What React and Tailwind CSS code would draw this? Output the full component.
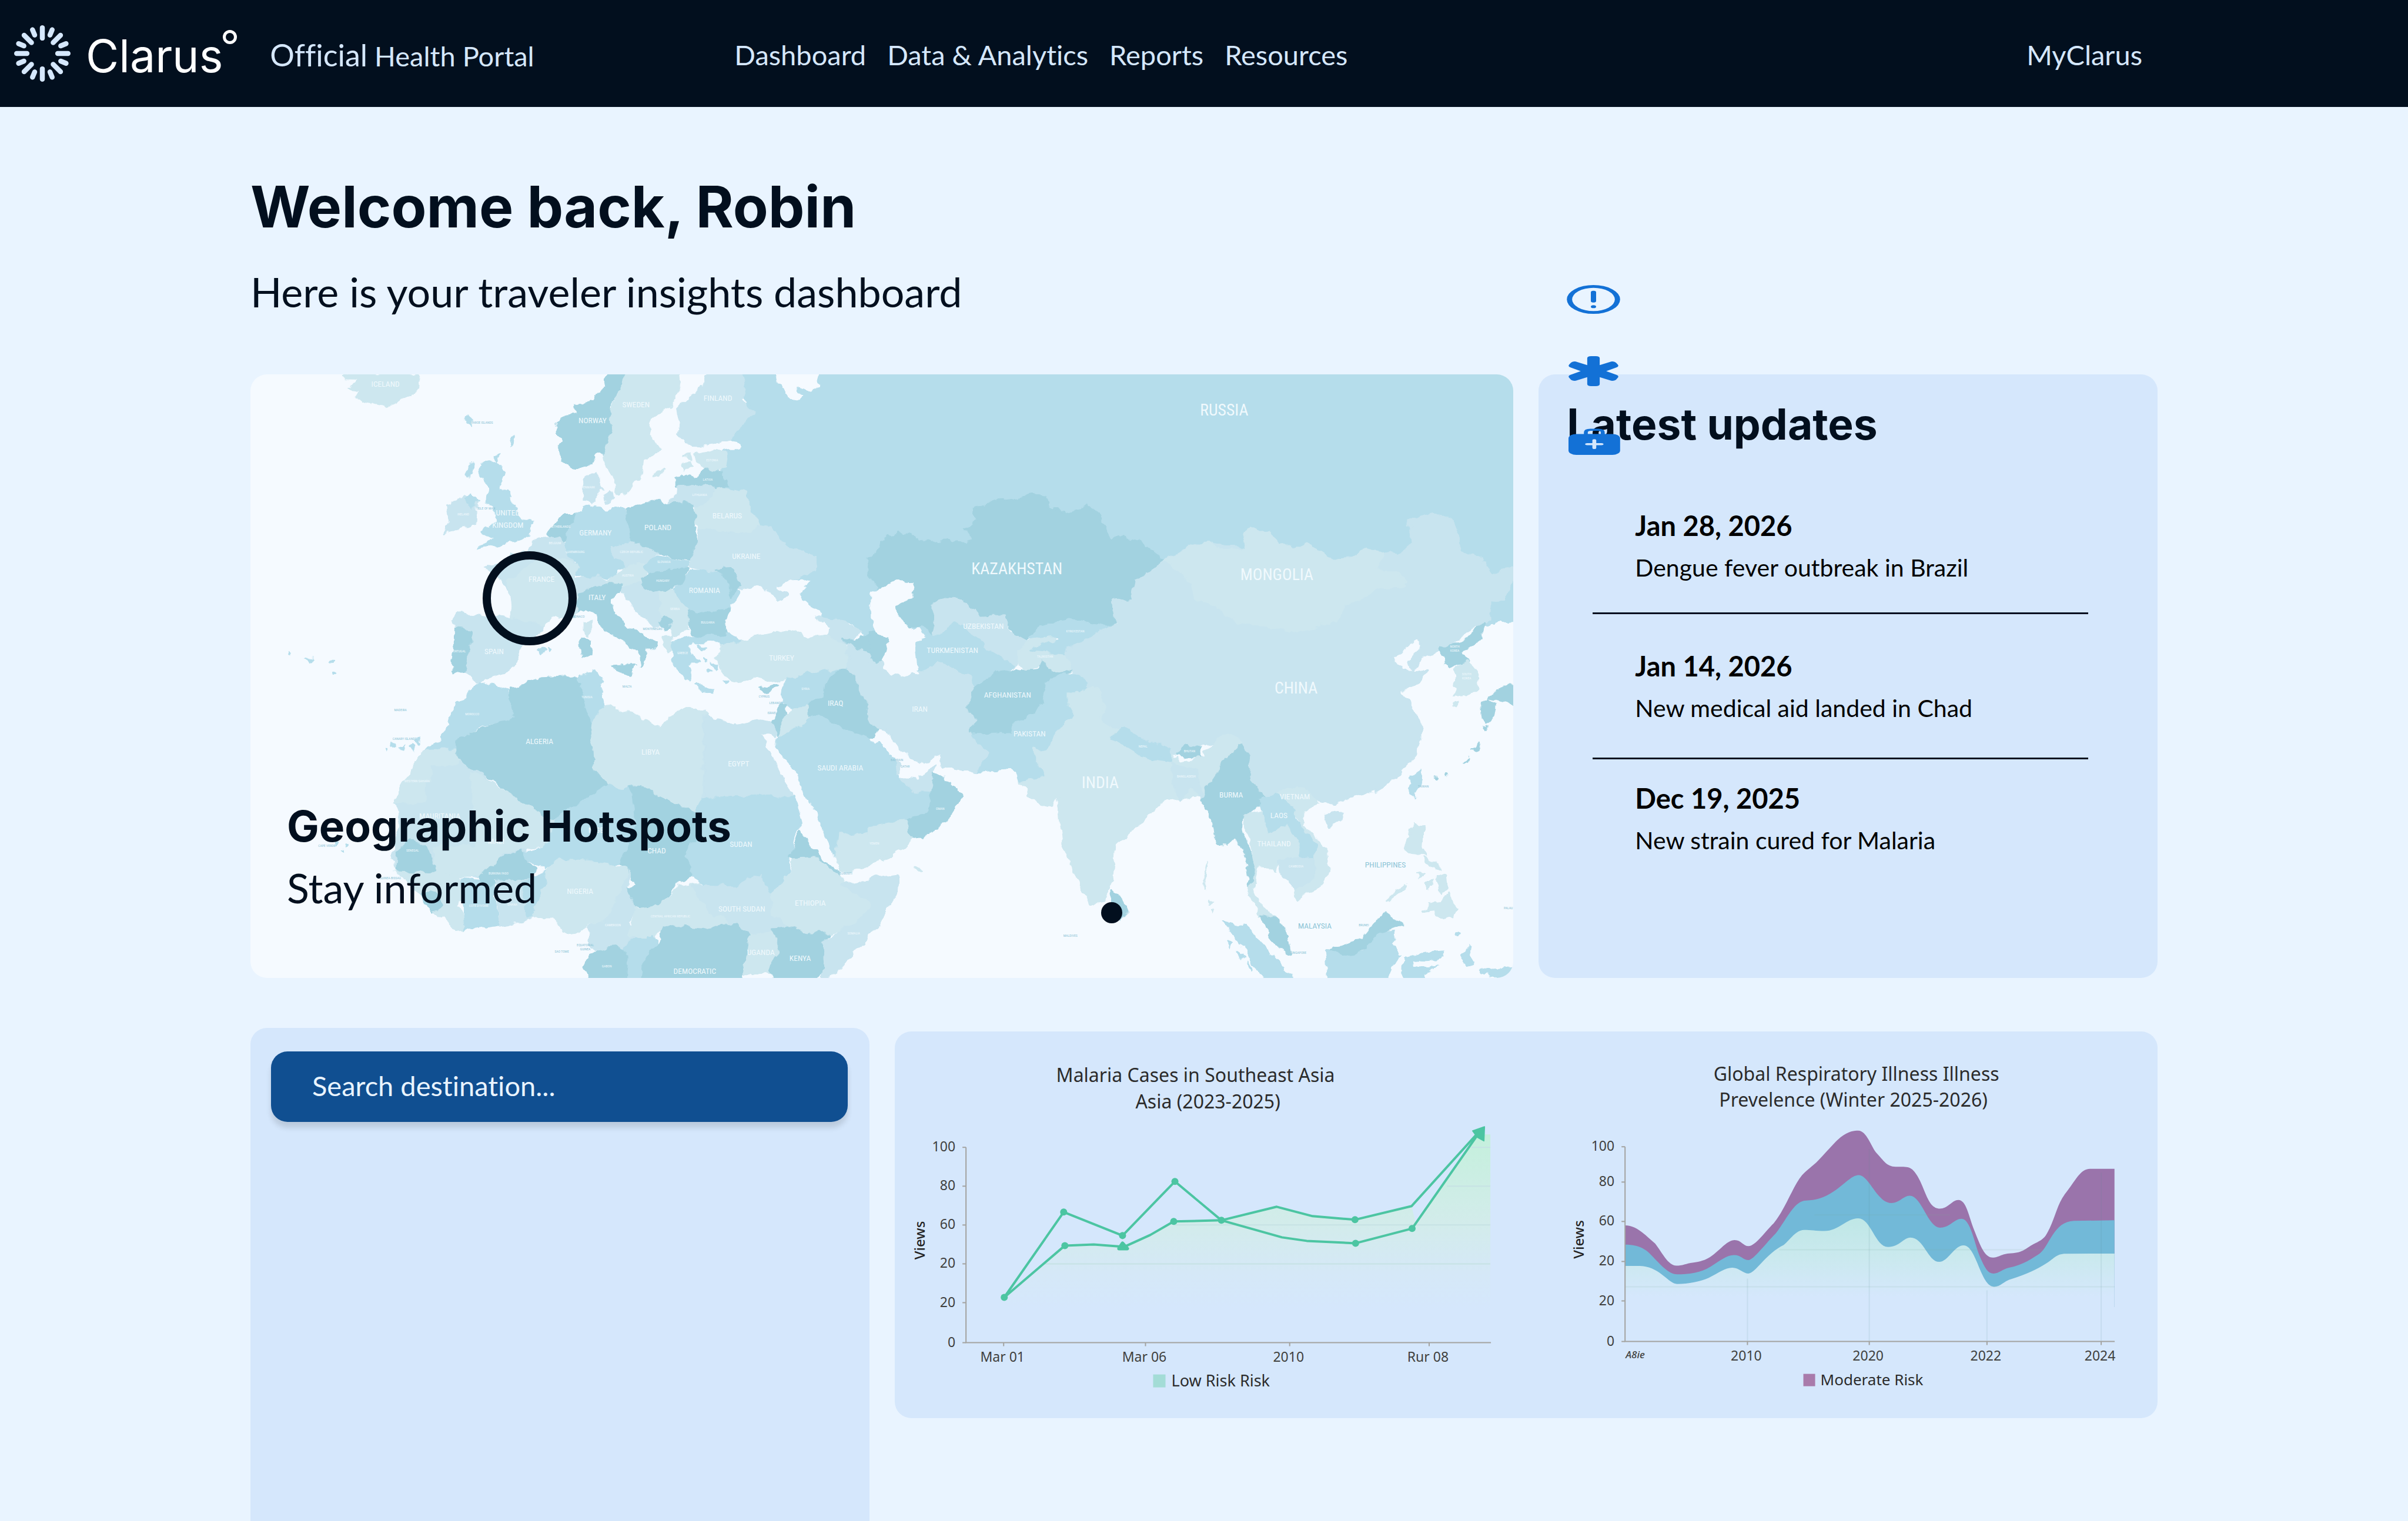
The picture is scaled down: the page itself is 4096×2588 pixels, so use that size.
import React from "react";

const navLinks = ["Dashboard", "Data & Analytics", "Reports", "Resources"];

const updates = [
  { date: "Jan 28, 2026", text: "Dengue fever outbreak in Brazil", box: "pb-[50px] border-b-[3px]" },
  { date: "Jan 14, 2026", text: "New medical aid landed in Chad", box: "pt-[60px] pb-[58px] border-b-[3px]" },
  { date: "Dec 19, 2025", text: "New strain cured for Malaria", box: "pt-[38px] pb-[50px]" },
];

// land tones used on the map
const DARK = "#a2d2e0";
const MID = "#b5ddeb";
const LIGHT = "#c8e4ef";
const PALE = "#cde7ef";
const SEA = "#f5faff";

// the map is stored as two sheets, each one with its own grid
const westShapes = [
  [PALE, "235,6 228,14 265,15 258,28 240,42 270,48 262,65 290,78 325,88 360,80 385,60 410,45 417,25 410,6"],
  [MID, "1205,0 1580,0 1580,760 1520,680 1480,640 1420,640 1400,610 1360,590 1345,565 1300,560 1200,480 1160,300 1165,205 1195,200 1215,190 1185,172 1205,145 1235,105"],
  [SEA, "1296,0 1302,28 1318,50 1332,68 1355,72 1360,60 1340,46 1345,35 1370,40 1385,48 1402,35 1392,22 1398,0"],
  [DARK, "885,0 875,20 880,40 850,60 845,80 800,90 805,105 775,110 755,130 768,145 758,165 770,178 760,190 772,210 765,235 800,248 835,235 858,205 880,220 882,190 890,170 898,150 888,130 885,90 900,65 925,30 930,0"],
  [PALE, "930,0 905,65 887,100 890,130 898,150 888,165 880,190 872,220 885,260 900,285 902,312 930,310 940,285 965,270 970,230 1010,200 1000,180 980,160 985,125 1010,105 1040,85 1055,55 1060,25 1058,0"],
  [LIGHT, "1128,0 1120,35 1075,70 1052,95 1060,130 1055,165 1075,188 1110,190 1160,178 1180,172 1240,105 1215,72 1222,50 1210,0"],
  [PALE, "995,275 1000,258 1018,250 1005,272"],
  [PALE, "1065,240 1085,230 1090,238 1070,250"],
  [PALE, "1068,220 1085,215 1088,224"],
  [PALE, "1095,210 1130,203 1175,208 1170,250 1140,255 1105,240"],
  [DARK, "1050,275 1065,260 1090,270 1105,275 1110,255 1125,248 1165,260 1178,292 1155,305 1120,292 1050,296"],
  [LIGHT, "1054,296 1120,293 1145,305 1130,342 1095,345 1030,340 1050,322"],
  [PALE, "1140,308 1180,300 1225,310 1228,350 1260,395 1235,418 1170,412 1105,408 1095,380 1100,345 1128,340"],
  [MID, "795,365 820,360 820,345 850,345 880,355 925,352 935,400 940,435 910,450 905,465 935,490 900,510 900,530 830,527 805,520 810,490 785,475 778,440 775,420 790,395"],
  [DARK, "930,352 1005,330 1030,340 1090,342 1100,370 1092,395 1104,440 1085,485 1040,478 1000,465 965,450 940,435 935,400"],
  [LIGHT, "820,280 855,258 858,288 870,300 848,320 840,335 822,325"],
  [LIGHT, "868,318 890,305 897,325 880,338"],
  [DARK, "728,420 755,385 770,365 798,365 790,395 775,420 770,435 745,425"],
  [LIGHT, "580,500 640,490 640,470 685,462 695,435 740,425 775,435 780,470 812,500 800,530 805,560 805,620 780,632 740,625 720,655 640,645 645,600 640,560 620,530 590,515"],
  [PALE, "640,540 700,490 780,480 812,500 800,530 805,620 780,632 740,625 720,655 640,645 645,600"],
  [LIGHT, "802,530 855,528 885,540 870,555 840,558 805,570"],
  [LIGHT, "895,455 935,435 960,445 1005,468 985,490 935,495 900,475"],
  [PALE, "880,540 905,520 925,498 975,495 975,520 965,540 930,550 895,548"],
  [MID, "970,500 1005,475 1080,490 1070,510 1015,515 985,522"],
  [LIGHT, "912,555 965,545 1015,570 1020,640 1000,655 960,620 930,585"],
  [PALE, "1012,565 1040,562 1080,608 1080,660 1040,680 1030,655 1015,630"],
  [DARK, "965,535 985,518 1040,505 1080,505 1065,545 1030,560 990,565 970,555"],
  [MID, "1060,550 1085,510 1160,512 1190,555 1212,575 1185,615 1120,618 1080,610 1055,580 1040,562"],
  [LIGHT, "1080,500 1105,440 1105,405 1170,412 1235,418 1250,395 1285,400 1310,435 1365,470 1398,475 1390,510 1330,540 1300,548 1325,570 1300,592 1280,570 1250,550 1215,560 1190,555 1160,512 1120,510"],
  [DARK, "1150,508 1180,505 1212,548 1195,560 1185,580 1180,540"],
  [DARK, "1078,612 1120,618 1190,613 1178,645 1175,680 1090,678"],
  [DARK, "1005,640 1020,628 1038,640 1020,660"],
  [DARK, "805,570 850,555 890,545 915,545 912,570 888,590 900,625 930,655 965,675 1000,700 998,712 970,705 980,725 960,758 955,720 920,690 870,665 855,620 835,605 805,618"],
  [DARK, "893,755 945,750 938,782 900,765"],
  [DARK, "815,685 843,685 840,730 820,730"],
  [PALE, "825,645 838,640 838,678 825,675"],
  [PALE, "1018,680 1040,680 1045,712 1028,718"],
  [MID, "1040,712 1050,690 1110,680 1170,680 1150,695 1095,695 1080,705 1085,725 1105,745 1075,745 1088,790 1060,775 1042,738"],
  [MID, "1095,806 1145,813 1140,822 1100,816"],
  [MID, "1110,700 1122,712 1116,716"],
  [MID, "1138,745 1150,752 1148,762"],
  [MID, "1120,735 1130,740 1124,744"],
  [MID, "1128,762 1136,768 1130,772"],
  [MID, "1168,795 1178,790 1172,800"],
  [SEA, "1190,605 1215,562 1250,552 1280,570 1300,592 1330,578 1325,566 1300,553 1330,540 1382,534 1352,568 1362,592 1400,615 1427,655 1420,678 1375,688 1330,670 1270,667 1220,684 1180,678 1172,650"],
  [LIGHT, "1395,628 1470,640 1505,668 1470,700 1425,682 1430,655"],
  [PALE, "1155,700 1205,690 1250,680 1330,662 1375,685 1425,678 1470,700 1480,765 1400,775 1330,785 1290,795 1250,785 1200,797 1160,765 1150,735 1165,715"],
  [MID, "1145,680 1180,676 1205,692 1155,698"],
  [DARK, "1465,685 1490,690 1535,665 1580,700 1580,745 1535,725 1500,730"],
  [DARK, "1255,815 1302,803 1275,827"],
  [LIGHT, "500,640 515,620 560,625 640,632 720,652 722,664 665,705 660,745 625,775 575,788 560,798 540,775 525,770 520,700 510,665"],
  [DARK, "505,660 550,665 545,690 535,710 535,740 528,772 500,775 497,740 505,700"],
  [MID, "708,715 722,710 730,716 716,723"],
  [MID, "736,710 745,712 740,716"],
  [MID, "575,235 605,230 632,262 608,300 635,310 650,345 670,378 695,385 690,420 650,435 600,445 565,456 600,425 568,408 612,388 600,350 580,330 590,300 562,262"],
  [LIGHT, "485,345 530,318 560,330 555,390 515,402 480,415 490,380"],
  [MID, "525,325 545,316 562,332 550,350"],
  [MID, "600,215 615,210 608,228"],
  [MID, "638,172 650,166 644,192"],
  [MID, "530,122 548,120 545,140"],
  [MID, "540,240 550,236 545,262 532,270"],
  [MID, "565,798 635,820 640,855 655,885 570,912 510,940 510,975 428,973 470,945 488,905 500,870 540,830"],
  [LIGHT, "395,1025 428,973 510,973 560,1028 620,1080 680,1230 560,1300 360,1283 350,1240 372,1170 358,1108 375,1055"],
  [PALE, "395,1025 428,973 508,973 508,1010 445,1012 445,1048 428,1055 425,1105 355,1108 375,1055"],
  [PALE, "548,1030 750,1152 740,1210 680,1222 620,1240 580,1290 520,1300 458,1283 455,1222 552,1220"],
  [DARK, "640,815 720,785 815,780 820,830 840,880 845,960 845,1010 885,1058 775,1130 740,1152 510,990 510,942 655,885 640,850"],
  [MID, "815,780 850,768 868,785 858,830 875,862 850,890 840,905 825,850"],
  [PALE, "875,860 920,872 960,880 975,900 1015,917 1035,890 1070,863 1120,870 1120,1140 1100,1135 955,1062 920,1078 885,1060 850,1020 845,950 840,900"],
  [LIGHT, "1118,888 1205,908 1250,893 1300,905 1298,940 1258,928 1300,1020 1340,1092 1118,1092"],
  [MID, "775,1130 885,1060 920,1078 945,1066 955,1160 915,1262 870,1272 760,1258 730,1282 668,1240 740,1208 750,1150"],
  [MID, "1120,1092 1340,1090 1358,1160 1340,1200 1325,1290 1285,1345 1250,1310 1200,1325 1130,1325 1085,1290 1068,1240 1090,1190 1100,1130"],
  [DARK, "940,1070 955,1062 1105,1138 1100,1190 1070,1240 1090,1290 1050,1320 1010,1370 945,1375 920,1332 950,1320 912,1265 952,1160"],
  [DARK, "360,1235 395,1203 435,1222 458,1283 360,1283"],
  [PALE, "358,1285 510,1290 525,1340 500,1375 465,1387 425,1345"],
  [DARK, "425,1340 455,1335 475,1375 450,1390"],
  [PALE, "455,1385 500,1370 530,1400 530,1437 490,1420"],
  [MID, "520,1305 600,1310 612,1422 530,1437"],
  [DARK, "565,1295 620,1250 665,1232 702,1275 680,1308 600,1310 580,1330"],
  [LIGHT, "608,1310 680,1305 692,1405 615,1425"],
  [MID, "675,1310 735,1285 720,1350 700,1402 680,1402"],
  [PALE, "730,1290 760,1256 870,1262 930,1280 915,1340 885,1400 840,1422 800,1442 770,1432 745,1402 695,1402 722,1340"],
  [LIGHT, "935,1282 930,1330 950,1380 930,1420 990,1455 975,1500 900,1500 840,1480 835,1430 890,1395"],
  [PALE, "950,1380 1010,1370 1060,1322 1110,1315 1200,1422 1100,1432 1010,1432 990,1458 932,1445"],
  [LIGHT, "1090,1320 1200,1322 1255,1290 1285,1345 1290,1400 1340,1430 1220,1452 1190,1425 1130,1380"],
  [PALE, "1340,1248 1400,1242 1450,1290 1470,1320 1545,1368 1470,1432 1420,1447 1340,1435 1290,1400 1285,1345 1330,1290"],
  [DARK, "1332,1245 1355,1182 1385,1225 1455,1292 1440,1285 1400,1243"],
  [LIGHT, "1410,1570 1410,1465 1480,1425 1545,1368 1460,1318 1500,1312 1580,1302 1580,1370 1500,1478 1420,1570"],
  [PALE, "1225,1447 1290,1438 1308,1480 1285,1545 1208,1545 1230,1490"],
  [DARK, "1288,1430 1330,1425 1380,1445 1425,1445 1410,1470 1412,1530 1395,1570 1300,1570 1283,1540 1305,1470"],
  [MID, "940,1455 1000,1455 1000,1500 970,1570 895,1570 905,1500"],
  [DARK, "1020,1425 1100,1432 1195,1420 1230,1450 1225,1495 1208,1570 965,1570 970,1520 1000,1480"],
  [DARK, "835,1500 875,1480 905,1478 930,1500 925,1570 845,1570 825,1530"],
  [MID, "1320,788 1420,770 1480,765 1420,800 1415,850 1345,872 1312,850"],
  [DARK, "1308,855 1320,858 1305,935 1290,900"],
  [PALE, "1315,878 1375,855 1380,880 1350,922 1308,935"],
  [LIGHT, "1475,700 1530,730 1580,745 1580,930 1545,910 1500,830 1475,770"],
  [DARK, "1418,800 1425,785 1460,766 1490,775 1505,830 1548,910 1540,940 1515,944 1405,887 1375,882 1373,855 1415,840"],
  [MID, "1308,935 1350,920 1380,885 1410,886 1515,943 1580,985 1580,1200 1520,1195 1455,1185 1448,1250 1380,1100 1330,1010 1296,962"],
  [PALE, "1450,1190 1520,1185 1580,1185 1580,1245 1500,1275 1455,1287 1445,1240"],
  [MID, "95,718 99,720 97,723"],
  [MID, "140,742 155,740 150,746"],
  [MID, "190,742 207,742 205,746"],
  [MID, "205,772 209,775 206,778"],
  [MID, "350,955 356,958 352,963"],
  [MID, "335,968 340,970 337,975"],
  [MID, "365,962 380,958 378,970"],
  [MID, "395,965 403,962 400,972"],
  [MID, "410,950 420,940 415,958"],
  [MID, "205,1205 210,1208 206,1212"],
  [MID, "222,1230 228,1228 226,1234"],
  [MID, "240,1212 246,1216 242,1220"],
];

const eastShapes = [
  [MID, "-20,0 1570,0 1570,636 1515,642 1500,650 1200,600 600,620 0,600 -20,560"],
  [DARK, "-25,480 0,468 8,440 50,410 78,415 110,440 165,432 210,440 238,435 215,403 242,380 232,352 330,325 375,316 408,320 415,345 470,362 515,342 545,375 575,435 590,425 640,435 700,480 675,510 672,540 630,536 620,582 575,590 588,635 575,657 470,637 420,650 362,692 335,680 310,630 250,627 190,578 138,590 138,680 80,660 45,610 -15,540"],
  [LIGHT, "138,590 185,576 205,585 248,627 310,625 322,670 365,695 390,685 355,740 330,765 280,725 240,690 165,680 138,680"],
  [MID, "80,655 110,658 130,680 155,680 185,643 215,655 245,685 260,712 335,755 320,770 280,780 240,812 225,785 160,750 95,778 80,740"],
  [PALE, "345,715 385,682 435,680 420,715 470,715 480,770 430,782 405,750 365,770 345,745"],
  [MID, "398,655 470,636 578,655 525,685 490,700 470,722 378,715 400,705 445,690 425,678 370,685"],
  [LIGHT, "575,590 620,585 630,536 675,510 705,480 790,440 1130,480 1240,465 1275,472 1312,435 1300,382 1360,360 1410,380 1435,465 1480,480 1500,520 1570,500 1535,585 1500,590 1500,635 1420,685 1382,714 1340,728 1308,765 1302,745 1335,700 1320,686 1280,722 1255,735 1262,750 1285,755 1285,770 1345,766 1335,790 1284,820 1310,862 1335,920 1320,985 1265,1045 1200,1085 1120,1110 1070,1095 1050,1070 990,1080 940,1105 895,1060 915,990 895,957 870,935 720,985 600,925 545,895 520,825 480,775 460,715 520,685 585,650"],
  [PALE, "705,482 800,436 838,460 905,455 897,420 920,400 975,425 980,445 1060,448 1110,480 1160,480 1200,452 1238,465 1220,515 1270,515 1295,547 1220,560 1205,575 1150,595 1130,640 1025,668 870,640 830,600 775,580 768,540"],
  [LIGHT, "98,775 150,748 225,782 235,812 222,865 245,895 230,925 270,980 245,1027 160,1017 155,985 105,1005 60,975 30,920 0,915 -20,905 -20,740 15,760 60,783"],
  [DARK, "235,812 300,768 320,773 395,765 405,743 425,775 475,768 440,785 415,805 412,850 380,880 330,905 325,928 250,935 228,925 245,895 220,865"],
  [MID, "230,932 325,930 330,905 380,880 410,850 415,800 450,775 490,780 520,815 465,830 485,880 440,930 420,965 390,970 412,1040 378,1060 345,1048 330,1020 245,1027 270,980"],
  [PALE, "465,832 535,805 558,855 545,890 600,930 650,965 720,985 740,1000 800,990 830,945 870,932 895,957 850,1000 820,1050 800,1085 700,1100 650,1150 600,1200 580,1220 575,1300 565,1330 550,1360 525,1366 505,1340 480,1280 455,1210 440,1090 425,1115 405,1118 375,1085 345,1052 410,1045 385,972 420,965 445,920 488,878 465,855"],
  [MID, "575,940 600,915 650,945 718,968 718,1000 650,988"],
  [DARK, "733,985 755,960 790,968 792,990"],
  [LIGHT, "718,1003 780,1022 798,1100 768,1068 740,1097 728,1060"],
  [DARK, "573,1332 595,1350 608,1385 595,1405 575,1380"],
  [DARK, "893,956 913,990 908,1050 958,1105 895,1140 890,1180 928,1280 912,1328 900,1240 880,1190 855,1217 835,1215 820,1150 793,1100 815,1055 850,1000"],
  [PALE, "895,1140 940,1132 1000,1165 1035,1200 1035,1248 985,1250 975,1285 935,1265 918,1335 945,1375 975,1405 935,1395 908,1335 928,1285"],
  [PALE, "975,1085 1005,1068 1055,1070 1080,1108 1042,1130 1040,1165 1100,1230 1106,1290 1075,1325 1028,1356 1022,1325 1070,1300 1072,1220 1015,1130"],
  [MID, "938,1105 975,1083 1022,1125 1018,1145 1075,1220 1070,1247 1033,1247 1035,1200 1005,1165 958,1180"],
  [LIGHT, "980,1250 1070,1245 1070,1300 1025,1328 990,1300"],
  [DARK, "940,1395 975,1405 1000,1440 1012,1495 985,1480 950,1430"],
  [MID, "850,1412 900,1425 980,1510 1022,1570 950,1570 905,1490"],
  [MID, "1098,1485 1140,1500 1195,1485 1225,1438 1265,1437 1258,1470 1280,1500 1235,1570 1105,1570"],
  [DARK, "1108,1485 1185,1460 1215,1420 1245,1388 1285,1420 1225,1440 1195,1480 1140,1500"],
  [MID, "1290,1510 1330,1495 1390,1490 1380,1508 1310,1513 1312,1530 1372,1528 1335,1545 1345,1570 1288,1570"],
  [MID, "1435,1500 1455,1472 1450,1500 1458,1520 1440,1525"],
  [MID, "1418,1435 1424,1440 1420,1448"],
  [MID, "1475,1540 1550,1530 1556,1545 1530,1560 1510,1548"],
  [PALE, "1310,1160 1342,1165 1335,1215 1348,1245 1300,1235 1295,1207"],
  [PALE, "1335,1385 1395,1345 1418,1375 1410,1408 1372,1402 1365,1380"],
  [PALE, "1248,1358 1290,1318 1296,1322 1258,1355"],
  [PALE, "1340,1250 1365,1262 1380,1285 1360,1275"],
  [PALE, "1320,1285 1338,1290 1330,1300"],
  [PALE, "1345,1310 1362,1305 1350,1335"],
  [PALE, "1370,1300 1395,1290 1398,1330 1375,1340"],
  [MID, "1330,1022 1334,1050 1315,1092 1300,1075 1308,1040"],
  [LIGHT, "1095,1140 1135,1130 1130,1152 1105,1168"],
  [DARK, "1378,710 1440,690 1490,640 1478,685 1430,722 1450,742 1400,758 1388,735"],
  [PALE, "1412,765 1448,742 1472,790 1462,822 1410,832 1418,795"],
  [DARK, "1570,808 1535,808 1498,838 1570,858"],
  [DARK, "1478,852 1498,842 1515,855 1510,885 1492,902 1482,890"],
  [DARK, "1455,970 1475,955 1465,970"],
  [DARK, "1437,1005 1448,990 1442,1002"],
  [DARK, "1488,912 1496,908 1492,918"],
  [DARK, "1366,1042 1376,1040 1370,1046"],
  [DARK, "1392,1036 1398,1034 1395,1038"],
  [PALE, "1410,855 1425,852 1418,858"],
  [MID, "-20,970 5,955 40,1000 55,1045 85,1077 132,1078 125,1132 65,1155 0,1170 -20,1190"],
  [LIGHT, "58,1045 100,1050 145,1003 132,1080 85,1077"],
  [LIGHT, "46,1008 56,1008 56,1032 48,1034"],
  [DARK, "140,1030 208,1085 190,1120 172,1150 125,1188 85,1200 65,1153 122,1132 132,1078"],
  [PALE, "-20,1168 65,1153 85,1200 68,1220 -20,1258"],
  [LIGHT, "-20,1300 52,1293 45,1340 0,1422 -20,1440"],
  [DARK, "-20,660 0,665 35,700 15,735 0,742 -20,735"],
  [SEA, "-15,570 18,555 50,540 85,545 80,580 40,600 52,640 82,660 90,700 98,775 65,783 15,762 15,735 30,700 10,670 -15,640"],
  [SEA, "82,665 98,658 115,685 90,690"],
  [PALE, "90,1278 112,1279 100,1284"],
  [PALE, "808,1262 800,1330 803,1290"],
  [PALE, "812,1358 818,1362 815,1368"],
  [PALE, "820,1382 824,1385 822,1390"],
  [MID, "855,1465 870,1470 862,1478"],
  [MID, "883,1490 898,1502 890,1508"],
  [MID, "908,1515 918,1528 914,1536"],
];

const place = {
  w: (x, y) => [x * 0.9694, y * 0.9311 - 6],
  e: (x, y) => [1500 + x * 0.9758, y * 0.9311 - 6],
};

// sheet, name, x, y, class name
const big = "text-[39px]";
const mid = "text-[19px]";
const small = "text-[8px]";
const placeNames = [
  ["e", "RUSSIA", 849, 113, big],
  ["e", "KAZAKHSTAN", 341, 520, big],
  ["e", "MONGOLIA", 978, 535, big],
  ["e", "CHINA", 1025, 826, big],
  ["e", "INDIA", 545, 1070, big],
  ["e", "UZBEKISTAN", 259, 660, mid],
  ["e", "TURKMENISTAN", 183, 722, mid],
  ["e", "AFGHANISTAN", 318, 837, mid],
  ["e", "PAKISTAN", 372, 937, mid],
  ["e", "IRAN", 103, 873, mid],
  ["e", "BURMA", 866, 1093, mid],
  ["e", "VIETNAM", 1022, 1098, mid],
  ["e", "LAOS", 983, 1147, mid],
  ["e", "THAILAND", 971, 1219, mid],
  ["e", "KYRGYZSTAN", 484, 669, small],
  ["e", "TAJIKISTAN", 410, 735, small],
  ["e", "NEPAL", 650, 965, small],
  ["e", "BHUTAN", 764, 978, small],
  ["e", "BANGLADESH", 756, 1043, small],
  ["e", "CAMBODIA", 1025, 1274, small],
  ["e", "OMAN", 153, 1125, small],
  ["e", "NORTH", 1414, 708, small],
  ["e", "KOREA", 1414, 719, small],
  ["e", "SOUTH", 1443, 779, small],
  ["e", "KOREA", 1443, 790, small],
  ["w", "ICELAND", 333, 39, mid],
  ["w", "NORWAY", 844, 132, mid],
  ["w", "SWEDEN", 951, 91, mid],
  ["w", "FINLAND", 1153, 75, mid],
  ["w", "UNITED", 635, 369, mid],
  ["w", "KINGDOM", 635, 401, mid],
  ["w", "GERMANY", 851, 421, mid],
  ["w", "POLAND", 1005, 406, mid],
  ["w", "BELARUS", 1176, 377, mid],
  ["w", "UKRAINE", 1223, 480, mid],
  ["w", "ROMANIA", 1120, 569, mid],
  ["w", "FRANCE", 718, 540, mid],
  ["w", "ITALY", 855, 587, mid],
  ["w", "SPAIN", 601, 726, mid],
  ["w", "TURKEY", 1310, 742, mid],
  ["w", "IRAQ", 1443, 858, mid],
  ["w", "ALGERIA", 713, 957, mid],
  ["w", "LIBYA", 987, 984, mid],
  ["w", "EGYPT", 1204, 1013, mid],
  ["w", "SAUDI ARABIA", 1455, 1024, mid],
  ["w", "MAURITANIA", 467, 1148, mid],
  ["w", "MALI", 606, 1213, mid],
  ["w", "NIGER", 858, 1184, mid],
  ["w", "CHAD", 1002, 1237, mid],
  ["w", "SUDAN", 1210, 1221, mid],
  ["w", "NIGERIA", 813, 1342, mid],
  ["w", "SOUTH SUDAN", 1212, 1387, mid],
  ["w", "ETHIOPIA", 1381, 1371, mid],
  ["w", "UGANDA", 1259, 1499, mid],
  ["w", "KENYA", 1356, 1513, mid],
  ["w", "DEMOCRATIC", 1096, 1546, mid],
  ["w", "IRELAND", 525, 369, small],
  ["w", "DENMARK", 833, 299, small],
  ["w", "ESTONIA", 1139, 230, small],
  ["w", "LATVIA", 1128, 280, small],
  ["w", "LITHUANIA", 1108, 319, small],
  ["w", "NETHERLANDS", 764, 401, small],
  ["w", "BELGIUM", 751, 443, small],
  ["w", "LUXEMBOURG", 801, 466, small],
  ["w", "CZECH REPUBLIC", 940, 466, small],
  ["w", "SLOVAKIA", 1020, 491, small],
  ["w", "AUSTRIA", 931, 526, small],
  ["w", "HUNGARY", 1017, 539, small],
  ["w", "SERBIA", 1047, 612, small],
  ["w", "BULGARIA", 1128, 647, small],
  ["w", "GREECE", 1066, 726, small],
  ["w", "PORTUGAL", 513, 721, small],
  ["w", "MOROCCO", 547, 882, small],
  ["w", "TUNISIA", 830, 839, small],
  ["w", "SYRIA", 1369, 818, small],
  ["w", "WESTERN SAHARA", 411, 1054, small],
  ["w", "SENEGAL", 400, 1232, small],
  ["w", "BURKINA FASO", 612, 1292, small],
  ["w", "COTE D'IVOIRE", 563, 1374, small],
  ["w", "GHANA", 646, 1372, small],
  ["w", "CAMEROON", 894, 1425, small],
  ["w", "CENTRAL AFRICAN REPUBLIC", 1036, 1401, small],
  ["w", "GABON", 879, 1530, small],
  ["w", "SOMALIA", 1488, 1446, small],
  ["w", "YEMEN", 1539, 1215, small],
];

// names that stand on water
const seaNames = [
  ["e", "PHILIPPINES", 1244, 1274, mid],
  ["e", "MALAYSIA", 1071, 1431, mid],
  ["e", "SINGAPORE", 1031, 1496, small],
  ["e", "BRUNEI", 1191, 1425, small],
  ["e", "TAIWAN", 1337, 1068, small],
  ["e", "MALDIVES", 472, 1451, small],
  ["e", "PALAU", 1545, 1380, small],
  ["e", "QATAR", 67, 1016, small],
  ["e", "BAHRAIN", 47, 1000, small],
  ["w", "FAROE ISLANDS", 572, 134, small],
  ["w", "ISLE OF MAN", 582, 354, small],
  ["w", "MALTA", 929, 812, small],
  ["w", "CYPRUS", 1267, 837, small],
  ["w", "LEBANON", 1296, 853, small],
  ["w", "ISRAEL", 1287, 880, small],
  ["w", "MONACO", 809, 631, small],
  ["w", "MONTENEGRO", 992, 664, small],
  ["w", "MADEIRA", 370, 871, small],
  ["w", "CANARY ISLANDS", 380, 945, small],
  ["w", "CAPE VERDE", 188, 1221, small],
  ["w", "GUINEA-BISSAU", 345, 1304, small],
  ["w", "EQUATORIAL", 826, 1475, small],
  ["w", "GUINEA", 826, 1486, small],
  ["w", "SAO TOME", 768, 1492, small],
  ["w", "DJIBOUTI", 1469, 1291, small],
];

const MapLabels = ({ names, color }) =>
  names.map(([sheet, name, x, y, size], i) => {
    const [px, py] = place[sheet](x, y);
    return (
      <text
        key={i}
        x={px}
        y={py}
        textAnchor="middle"
        fill={color}
        className={`${size} font-['Roboto_Condensed','Liberation_Sans_Narrow',Roboto,sans-serif]`}
      >
        {name}
      </text>
    );
  });

const WorldMap = () => (
  <svg viewBox="0 0 3020 1444" preserveAspectRatio="xMidYMid slice" className="block w-full h-full">
    <defs>
      {/* roughens the borders so coasts don't look ruled */}
      <filter id="coast" x="-20" y="-20" width="3060" height="1484" filterUnits="userSpaceOnUse" colorInterpolationFilters="sRGB">
        <feTurbulence type="fractalNoise" baseFrequency="0.035" numOctaves="3" seed="4" result="noise" />
        <feDisplacementMap in="SourceGraphic" in2="noise" scale="22" xChannelSelector="R" yChannelSelector="G" />
      </filter>
    </defs>
    <rect width="3020" height="1444" fill={SEA} />
    <g filter="url(#coast)">
      <g transform="translate(0 -6) scale(0.9694 0.9311)">
        {westShapes.map(([fill, points], i) => (
          <polygon key={i} points={points} fill={fill} stroke={fill} strokeWidth="4" strokeLinejoin="round" />
        ))}
      </g>
      <g transform="translate(1500 -6) scale(0.9758 0.9311)">
        {eastShapes.map(([fill, points], i) => (
          <polygon key={i} points={points} fill={fill} stroke={fill} strokeWidth="4" strokeLinejoin="round" />
        ))}
      </g>
    </g>
    <MapLabels names={placeNames} color="#f0f9fd" />
    <MapLabels names={seaNames} color="#8cc4d6" />
  </svg>
);

const Logo = () => (
  <a href="#home" aria-label="Clarus home" className="flex items-center text-white">
    <svg viewBox="-68 -68 136 136" className="w-24 h-24" stroke="#d5e7fc" strokeLinecap="round">
      {[0, 45, 90, 135, 180, 225, 270, 315].map((a) => (
        <g key={a} transform={`rotate(${a})`}>
          <line x1="0" y1="-37" x2="0" y2="-62" strokeWidth="12" />
          <line x1="0" y1="-48" x2="0" y2="-62" strokeWidth="12" transform="rotate(22.5)" />
        </g>
      ))}
    </svg>
    <span className="ml-[26px] mt-2 text-[77px] leading-24 font-[Inter,sans-serif]">Clarus</span>
    <svg viewBox="0 0 24 24" className="w-6 h-6 self-start mt-3" fill="none" stroke="white" strokeWidth="5">
      <circle cx="12" cy="12" r="9.5" />
    </svg>
  </a>
);

const Header = () => (
  <header className="grid grid-cols-[30.5%_1fr_auto] items-center h-[182px] bg-[#020f1e] text-[#d5e7fc] text-[47px] [font-variant-ligatures:none]">
    <div className="flex items-center pl-6">
      <Logo />
      <p className="ml-14 mt-1 whitespace-nowrap">
        <span className="text-[52px]">Official</span> Health Portal
      </p>
    </div>
    <nav className="flex gap-9 mt-1">
      {navLinks.map((link) => (
        <a key={link} href="#nav">
          {link}
        </a>
      ))}
    </nav>
    <a href="#account" className="mt-1 mr-[452px]">
      MyClarus
    </a>
  </header>
);

const UpdateIcons = () => (
  <div className="absolute left-[39px] -top-[157px] flex flex-col gap-[63px]">
    <svg viewBox="16 46 460 250" className="w-[109px] h-[59px]" fill="#1371d6">
      <path
        fillRule="evenodd"
        d="M54 171a192 104 0 1 0 384 0a192 104 0 1 0 -384 0ZM92 171a154 84 0 1 1 308 0a154 84 0 1 1 -308 0Z"
      />
      <rect x="227" y="108" width="38" height="85" rx="17" ry="11" />
      <ellipse cx="246" cy="223" rx="19" ry="11" />
    </svg>
    <svg viewBox="16 563 460 250" className="w-[109px] h-[59px]" fill="#1371d6">
      <path d="M201 595Q201 580 229 580H263Q291 580 291 595V645L363 622Q389 613 408 627L421 640Q433 653 411 662L338 688L411 714Q433 723 421 736L408 750Q389 763 363 754L291 731V780Q291 796 263 796H229Q201 796 201 780V731L129 754Q103 763 84 750L71 736Q59 723 81 714L154 688L81 662Q59 653 71 640L84 627Q103 613 129 622L201 645Z" />
    </svg>
    <svg viewBox="16 1078 460 250" className="w-[109px] h-[59px]" fill="#1371d6">
      <path
        fillRule="evenodd"
        d="M177 1145V1127Q177 1101 224 1101H280Q327 1101 327 1127V1145ZM205 1140H299V1128Q299 1116 276 1116H228Q205 1116 205 1128Z"
      />
      <rect x="66" y="1139" width="372" height="151" rx="56" ry="32" />
      <rect x="186" y="1205" width="132" height="15" rx="14" ry="7" fill="#d5e7fc" />
      <rect x="238" y="1177" width="28" height="71" rx="13" ry="9" fill="#d5e7fc" />
    </svg>
  </div>
);

const LatestUpdates = () => (
  <section className="relative rounded-[28px] bg-[#d5e7fc] pt-[45px]">
    <h2 className="pl-12 text-[73px] leading-20 font-bold text-[#020f1e] font-[Inter,sans-serif]">Latest updates</h2>
    <UpdateIcons />
    <ul className="mt-[104px] ml-[92px] mr-[118px] text-black">
      {updates.map((item) => (
        <li key={item.date} className={`px-[72px] border-[#020f1e] ${item.box}`}>
          <p className="text-[47px] leading-14 font-bold">{item.date}</p>
          <p className="mt-[18px] text-[41px] leading-[52px] whitespace-nowrap">{item.text}</p>
        </li>
      ))}
    </ul>
  </section>
);

const Hotspots = () => (
  <section className="relative col-span-2 h-[1027px] overflow-hidden rounded-[28px]">
    <WorldMap />
    <span className="absolute left-[22.1%] top-[37.1%] w-40 h-40 -translate-1/2 rounded-full border-14 border-[#020f1e]" />
    <span className="absolute left-[68.2%] top-[89.2%] w-9 h-9 -translate-1/2 rounded-full bg-[#020f1e]" />
    <div className="absolute left-[62px] bottom-[114px] text-[#020f1e]">
      <h2 className="text-[73px] leading-20 font-bold font-[Inter,sans-serif]">Geographic Hotspots</h2>
      <p className="mt-6 text-[70px] leading-20">Stay informed</p>
    </div>
  </section>
);

const Axis = ({ x, right, top, bottom, yTicks, xTicks }) => (
  <g>
    <path d={`M${x} ${top}V${bottom}H${right}`} fill="none" stroke="#a3a3a0" strokeWidth="2" />
    {yTicks.map(([label, y], i) => (
      <g key={i}>
        <line x1={x - 6} x2={x} y1={y} y2={y} stroke="#a3a3a0" strokeWidth="2" />
        <text x={x - 18} y={y + 7} textAnchor="end" fill="#3f3f3d" className="text-[23px]">
          {label}
        </text>
      </g>
    ))}
    {xTicks.map(([label, tx]) => (
      <g key={label}>
        <line x1={tx} x2={tx} y1={bottom} y2={bottom + 6} stroke="#a3a3a0" strokeWidth="2" />
        <text x={tx - 2} y={bottom + 32} textAnchor="middle" fill="#3f3f3d" className="text-[23px]">
          {label}
        </text>
      </g>
    ))}
    <text
      transform={`translate(${x - 70} ${(top + bottom) / 2 - 8}) rotate(-90)`}
      textAnchor="middle"
      fill="#222"
      className="text-[24px] font-medium"
    >
      Views
    </text>
  </g>
);

const upperLine = "186,452 287,307 387,347 476,255 555,321 658,350 700,356 783,360 879,335 993,172";
const lowerLine = "186,452 289,364 338,362 390,366 434,346 474,323 555,321 649,298 710,314 782,320 878,297 995,168";
const dots = [
  [186, 452], [287, 307], [387, 347], [476, 255], [555, 321], [783, 360],
  [879, 335], [289, 364], [474, 323], [782, 320],
];

const MalariaChart = () => (
  <svg viewBox="0 0 1073 657" className="block w-full">
    <defs>
      <linearGradient id="malariaFill" x1="0" y1="170" x2="0" y2="470" gradientUnits="userSpaceOnUse">
        <stop offset="0" stopColor="#c4f0dc" />
        <stop offset="0.5" stopColor="#d2ecea" />
        <stop offset="0.8" stopColor="#d5e8f7" />
        <stop offset="1" stopColor="#d5e7fc" />
      </linearGradient>
    </defs>
    <g fill="#2b2b2b" textAnchor="middle" className="text-[32px]">
      <text x="511" y="86">Malaria Cases in Southeast Asia</text>
      <text x="532" y="131">Asia (2023-2025)</text>
    </g>
    <path
      d="M186 452L289 364L338 362L390 366L434 346L474 323L555 321L649 298L710 314L782 320L878 297L885 325L993 175H1012V500H186Z"
      fill="url(#malariaFill)"
    />
    <path d="M980 197H1012M938 263H1012M474 329H1012M254 395H1012" stroke="#c6e2e4" strokeWidth="2" />
    <g fill="none" stroke="#4cc5a2" strokeWidth="4" strokeLinejoin="round">
      <polyline points={upperLine} />
      <polyline points={lowerLine} />
    </g>
    {dots.map(([cx, cy]) => (
      <circle key={`${cx}-${cy}`} cx={cx} cy={cy} r="6" fill="#4cc5a2" />
    ))}
    <path d="M381 369L387 360L395 369Z" fill="#4cc5a2" stroke="#4cc5a2" strokeWidth="6" strokeLinejoin="round" />
    <path d="M982 169L1002 162L1001 186L990 180Z" fill="#4cc5a2" stroke="#4cc5a2" strokeWidth="2" strokeLinejoin="round" />
    <Axis
      x={121}
      right={1013}
      top={197}
      bottom={529}
      yTicks={[["100", 197], ["80", 263], ["60", 329], ["20", 395], ["20", 461], ["0", 529]]}
      xTicks={[["Mar 01", 185], ["Mar 06", 426], ["2010", 671], ["Rur 08", 908]]}
    />
    <rect x="439" y="583" width="21" height="22" fill="#a3dcd6" />
    <text x="470" y="603" fill="#2b2b2b" className="text-[27px]">Low Risk Risk</text>
  </svg>
);

const RespiratoryChart = () => (
  <svg viewBox="0 0 1073 657" className="block w-full">
    <defs>
      <linearGradient id="respFill" x1="0" y1="750" x2="0" y2="1060" gradientUnits="userSpaceOnUse">
        <stop offset="0" stopColor="#bfe7e6" />
        <stop offset="0.5" stopColor="#cae9ee" />
        <stop offset="1" stopColor="#d5e7fc" />
      </linearGradient>
    </defs>
    <g fill="#2b2b2b" textAnchor="middle" className="text-[32px]">
      <text x="561" y="84">Global Respiratory Illness Illness</text>
      <text x="556" y="128">Prevelence (Winter 2025-2026)</text>
    </g>
    <g transform="translate(0 -5.6) scale(0.6894 0.4309)">
      <path
        fill="#9a74ab"
        d="M244 778C270 778 290 810 318 850C335 885 350 937 370 937C385 937 395 928 410 925C450 918 460 895 480 868C495 845 505 836 514 836C530 836 535 860 548 860C565 860 590 800 610 770C640 710 655 630 680 580C695 555 705 545 715 530C745 480 760 450 775 430C795 405 810 404 818 404C840 404 850 470 865 495C885 530 890 547 915 547C945 547 950 547 965 585C985 640 990 712 1020 712C1040 712 1050 678 1065 678C1085 678 1090 740 1105 800C1120 860 1130 905 1150 905C1165 905 1170 890 1195 888C1225 885 1230 870 1250 852C1280 830 1280 820 1290 790C1305 740 1310 690 1330 650C1355 600 1365 556 1390 555H1450V1100H244Z"
      />
      <path
        fill="#72b9d8"
        d="M244 854C270 854 290 865 305 890C330 930 350 971 372 971C400 971 430 965 455 940C480 915 495 895 512 895C530 895 535 915 548 915C560 915 590 850 615 810C640 760 660 680 690 680C725 678 745 660 770 630C795 600 805 580 820 580C845 580 865 690 900 690C920 690 930 661 945 661C975 661 990 787 1020 787C1045 787 1055 752 1073 752C1095 752 1105 850 1118 900C1130 945 1138 968 1152 968C1165 968 1175 950 1190 945C1225 935 1250 905 1265 890C1290 860 1300 762 1350 760L1450 758V1100H244Z"
      />
      <path
        fill="url(#respFill)"
        d="M244 938H280C330 940 350 1009 372 1009C400 1009 430 1000 450 985C475 965 490 945 508 945C525 945 535 968 547 968C565 968 590 890 635 855C650 835 665 796 685 796C700 796 715 800 735 800C770 800 790 750 818 750C850 750 860 863 892 863C920 863 930 826 947 826C980 826 990 922 1018 922C1040 922 1055 857 1078 857C1110 857 1120 1020 1153 1020C1170 1020 1175 1000 1195 990C1235 970 1260 950 1280 930C1300 912 1305 890 1330 890L1450 889L1450 1235H244Z"
      />
    </g>
    <path d="M376 420V527M583 200V527M783 440V527M977 240V527" stroke="#5b8a92" strokeOpacity="0.12" strokeWidth="2" />
    <path d="M168 434H1000M430 371H880M490 312H720" stroke="#7fae9c" strokeOpacity="0.14" strokeWidth="2" />
    <Axis
      x={168}
      right={1000}
      top={196}
      bottom={527}
      yTicks={[["100", 196], ["80", 256], ["60", 323], ["20", 391], ["20", 458], ["0", 527]]}
      xTicks={[["2010", 376], ["2020", 583], ["2022", 783], ["2024", 977]]}
    />
    <text x="169" y="555" fill="#3f3f3d" className="text-[17px] italic font-medium">A8ie</text>
    <rect x="471" y="582" width="20" height="21" fill="#a97bab" />
    <text x="500" y="601" fill="#2b2b2b" className="text-[26px]">Moderate Risk</text>
  </svg>
);

export default function App() {
  return (
    <div className="h-screen overflow-hidden bg-[#e9f4ff] text-[#020f1e] font-[Lato,sans-serif]">
      <Header />
      <main className="w-[79.2%] mx-auto pt-[114px]">
        <h1 className="text-[98px] leading-28 font-bold font-[Inter,sans-serif]">Welcome back, Robin</h1>
        <p className="mt-12 text-[70px] leading-20">Here is your traveler insights dashboard</p>

        <div className="mt-[101px] grid grid-cols-3 gap-x-[43px] gap-y-[85px] items-start">
          <Hotspots />
          <div className="grid h-full">
            <LatestUpdates />
          </div>

          <section className="h-[1000px] rounded-[28px] bg-[#d5e7fc] pt-10 pl-[35px] pr-[37px]">
            <input
              type="text"
              aria-label="Search destination"
              placeholder="Search destination..."
              className="block w-full h-[120px] rounded-[28px] bg-[#104f91] pl-[70px] pb-1 text-[47px] text-[#e9f4ff] placeholder:text-[#e9f4ff] shadow-[0_10px_10px_rgba(0,0,0,0.12)] [font-variant-ligatures:none]"
            />
          </section>

          <section className="col-span-2 mt-1.5 grid grid-cols-2 rounded-[28px] bg-[#d5e7fc] font-['Noto_Sans',sans-serif]">
            <MalariaChart />
            <RespiratoryChart />
          </section>
        </div>
      </main>
    </div>
  );
}
